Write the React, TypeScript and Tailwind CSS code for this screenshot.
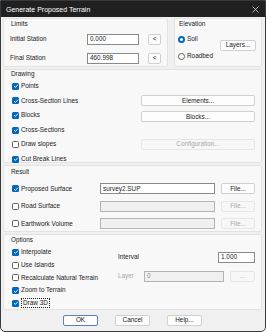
import React from "react";

const font = { fontFamily: '"Liberation Sans", Arial, sans-serif' };

function Check({ checked, label, focus }: { checked: boolean; label: string; focus?: boolean }) {
  return (
    <div className="flex items-center gap-[2px]">
      {checked ? (
        <div className="w-[7px] h-[7px] rounded-[1.5px] bg-[#0067c0] flex items-center justify-center">
          <svg width="6" height="6" viewBox="0 0 6 6">
            <path d="M1 3.1 L2.4 4.4 L5 1.6" fill="none" stroke="white" strokeWidth="0.9" />
          </svg>
        </div>
      ) : (
        <div className="w-[7px] h-[7px] rounded-[1.5px] border border-[#5f5f5f] bg-white" />
      )}
      <span className={focus ? "border border-dotted border-[#222] px-[1px] leading-[8px]" : ""}>{label}</span>
    </div>
  );
}

function Btn({ label, w, disabled, def }: { label: string; w: string; disabled?: boolean; def?: boolean }) {
  return (
    <div
      className={`${w} h-[11px] flex items-center justify-center rounded-[2px] border ${
        def ? "border-[#5a7fb5] bg-[#fdfdfd] text-[#1a1a1a]" : disabled ? "border-[#e6e6e6] bg-[#f7f7f7] text-[#a8a8a8]" : "border-[#d0d0d0] bg-[#fdfdfd] text-[#1a1a1a]"
      }`}
    >
      {label}
    </div>
  );
}

function Input({ value, w, disabled }: { value: string; w: string; disabled?: boolean }) {
  return (
    <div
      className={`${w} h-[11px] flex items-center px-[2px] border ${
        disabled ? "border-[#b4b4b4] bg-[#f0f0f0] text-[#8a8a8a]" : "border-[#8a8a8a] bg-white text-[#1a1a1a]"
      }`}
    >
      {value}
    </div>
  );
}

function Radio({ checked, label }: { checked: boolean; label: string }) {
  return (
    <div className="flex items-center gap-[2px]">
      {checked ? (
        <div className="w-[7px] h-[7px] rounded-full bg-[#0067c0] flex items-center justify-center">
          <div className="w-[3px] h-[3px] rounded-full bg-white" />
        </div>
      ) : (
        <div className="w-[7px] h-[7px] rounded-full border border-[#5f5f5f] bg-white" />
      )}
      <span>{label}</span>
    </div>
  );
}

const group = "bg-[#f8f8f8] border border-[#e2e2e2] rounded-[2px]";

export default function App() {
  return (
    <div
      style={font}
      className="w-[266px] h-[332px] bg-[#f0f0f0] border border-[#3a3a3a] rounded-b-[5px] overflow-hidden flex flex-col text-[6.4px] text-[#1a1a1a] leading-none"
    >
      <div className="h-[16px] shrink-0 bg-[#202020] flex items-center justify-between pl-[5px] pr-[6px] text-white text-[7px]">
        <span>Generate Proposed Terrain</span>
        <svg width="7" height="7" viewBox="0 0 7 7">
          <path d="M0.5 0.5 L6.5 6.5 M6.5 0.5 L0.5 6.5" stroke="#d8d8d8" strokeWidth="0.8" />
        </svg>
      </div>
      <div className="flex flex-col pl-[2px] pr-[3px] pt-[1px] gap-[2px]">
        <div className="flex gap-[6px] h-[49px]">
          <div className={`${group} w-[165px] flex flex-col`}>
            <div className="h-[10px] flex items-center pl-[7px]">Limits</div>
            <div className="flex items-center h-[11px] mt-[5px] pl-[6px]">
              <span className="w-[77px]">Initial Station</span>
              <Input value="0.000" w="w-[52px]" />
              <div className="ml-[9px]">
                <Btn label="<" w="w-[13px]" />
              </div>
            </div>
            <div className="flex items-center h-[11px] mt-[8px] pl-[6px]">
              <span className="w-[77px]">Final Station</span>
              <Input value="460.998" w="w-[52px]" />
              <div className="ml-[9px]">
                <Btn label="<" w="w-[13px]" />
              </div>
            </div>
          </div>
          <div className={`${group} flex-1 flex flex-col`}>
            <div className="h-[10px] flex items-center pl-[4px]">Elevation</div>
            <div className="flex items-center justify-between pl-[3px] pr-[5px]">
              <div className="flex flex-col">
                <div className="h-[11px] mt-[5px] flex items-center">
                  <Radio checked label="Soil" />
                </div>
                <div className="h-[11px] mt-[6px] flex items-center">
                  <Radio checked={false} label="Roadbed" />
                </div>
              </div>
              <Btn label="Layers..." w="w-[36px]" />
            </div>
          </div>
        </div>

        <div className={`${group} h-[94px] flex flex-col`}>
          <div className="h-[9px] shrink-0 flex items-center pl-[7px]">Drawing</div>
          <div className="flex flex-col pl-[8px] pr-[6px]">
            <div className="h-[14.6px] shrink-0 flex items-center justify-between">
              <Check checked label="Points" />
            </div>
            <div className="h-[14.6px] shrink-0 flex items-center justify-between">
              <Check checked label="Cross-Section Lines" />
              <Btn label="Elements..." w="w-[114px]" />
            </div>
            <div className="h-[14.6px] shrink-0 flex items-center justify-between">
              <Check checked label="Blocks" />
              <div className="mt-[3px]">
                <Btn label="Blocks..." w="w-[114px]" />
              </div>
            </div>
            <div className="h-[14.6px] shrink-0 flex items-center justify-between">
              <Check checked label="Cross-Sections" />
            </div>
            <div className="h-[14.6px] shrink-0 flex items-center justify-between">
              <Check checked={false} label="Draw slopes" />
              <Btn label="Configuration..." w="w-[114px]" disabled />
            </div>
            <div className="h-[14.6px] shrink-0 flex items-center justify-between">
              <Check checked label="Cut Break Lines" />
            </div>
          </div>
        </div>

        <div className={`${group} h-[67px] flex flex-col`}>
          <div className="h-[12px] shrink-0 flex items-center pl-[7px]">Result</div>
          <div className="flex flex-col pl-[8px] pr-[6px] mt-[2px]">
            <div className="h-[17.5px] shrink-0 flex items-center">
              <div className="w-[89px]">
                <Check checked label="Proposed Surface" />
              </div>
              <Input value="survey2.SUP" w="w-[116px]" />
              <div className="ml-[6px]">
                <Btn label="File..." w="w-[34px]" />
              </div>
            </div>
            <div className="h-[17.5px] shrink-0 flex items-center">
              <div className="w-[89px]">
                <Check checked={false} label="Road Surface" />
              </div>
              <Input value="" w="w-[116px]" disabled />
              <div className="ml-[6px]">
                <Btn label="File..." w="w-[34px]" disabled />
              </div>
            </div>
            <div className="h-[17.5px] shrink-0 flex items-center">
              <div className="w-[89px]">
                <Check checked={false} label="Earthwork Volume" />
              </div>
              <Input value="" w="w-[116px]" disabled />
              <div className="ml-[6px]">
                <Btn label="File..." w="w-[34px]" disabled />
              </div>
            </div>
          </div>
        </div>

        <div className={`${group} h-[76px] flex flex-col`}>
          <div className="h-[10px] shrink-0 flex items-center pl-[7px]">Options</div>
          <div className="flex pl-[8px] pr-[6px] mt-[1px]">
            <div className="flex flex-col w-[106px]">
              <div className="h-[12.75px] shrink-0 flex items-center">
                <Check checked label="Interpolate" />
              </div>
              <div className="h-[12.75px] shrink-0 flex items-center">
                <Check checked={false} label="Use Islands" />
              </div>
              <div className="h-[12.75px] shrink-0 flex items-center">
                <Check checked={false} label="Recalculate Natural Terrain" />
              </div>
              <div className="h-[12.75px] shrink-0 flex items-center">
                <Check checked label="Zoom to Terrain" />
              </div>
              <div className="h-[12.75px] shrink-0 flex items-center">
                <Check checked label="Draw 3D" focus />
              </div>
            </div>
            <div className="flex-1 flex flex-col pt-[6px]">
              <div className="h-[11px] flex items-center justify-between">
                <span>Interval</span>
                <Input value="1.000" w="w-[37px]" />
              </div>
              <div className="h-[11px] mt-[8px] flex items-center">
                <span className="w-[26px] text-[#a8a8a8]">Layer</span>
                <Input value="0" w="w-[80px]" disabled />
                <div className="ml-[6px]">
                  <Btn label="..." w="w-[25px]" disabled />
                </div>
              </div>
            </div>
          </div>
        </div>

        <div className="flex justify-center gap-[17px] mt-[3px]">
          <Btn label="OK" w="w-[35px]" def />
          <Btn label="Cancel" w="w-[35px]" />
          <Btn label="Help..." w="w-[35px]" />
        </div>
      </div>
    </div>
  );
}
